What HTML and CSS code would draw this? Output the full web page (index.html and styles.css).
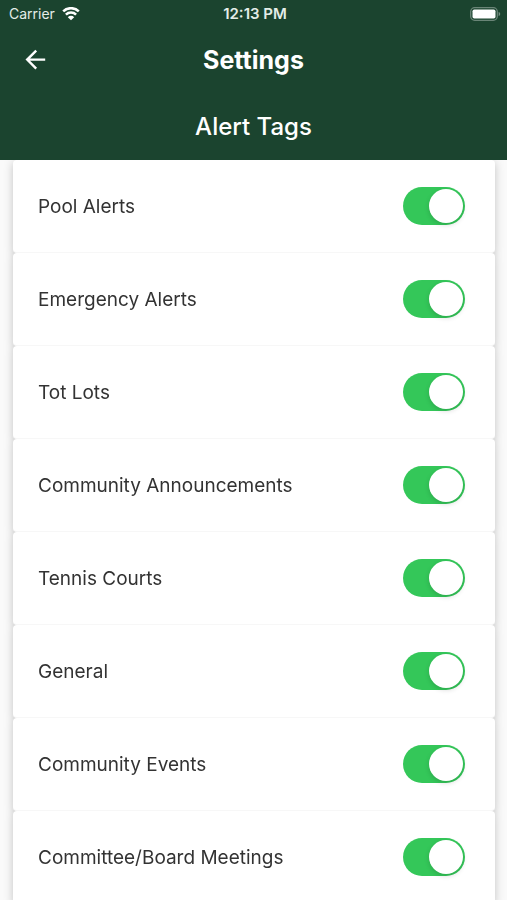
FILE: index.html
```
<!DOCTYPE html>
<html lang="en">
<head>
    <meta charset="UTF-8">
    <meta name="viewport" content="width=device-width, initial-scale=1.0">
    <title>Settings</title>
    <link rel="stylesheet" href="styles.css">
</head>
<body>
<header class="header">
    <div class="status-bar">
        <div class="carrier">
            <span>Carrier</span>
            <svg class="wifi" viewBox="0 0 18 14" aria-hidden="true">
                <path d="M1.2 4.4a11 11 0 0 1 15.6 0M3.9 7.7a7.2 7.2 0 0 1 10.2 0" fill="none" stroke="currentColor" stroke-width="2.5"/>
                <path d="M9 13.3L5.8 10.2a4.5 4.5 0 0 1 6.4 0z" fill="currentColor"/>
            </svg>
        </div>
        <time class="clock">12:13 PM</time>
        <svg class="battery" viewBox="0 0 31 14" aria-hidden="true">
            <rect x="0.7" y="0.7" width="26.6" height="12.6" rx="4" fill="none" stroke="currentColor" stroke-opacity="0.35" stroke-width="1.3"/>
            <rect x="2.5" y="2.5" width="23" height="9" rx="1.8" fill="currentColor"/>
            <path d="M28.6 5v4c1.1-.4 1.6-1.1 1.6-2s-.5-1.6-1.6-2z" fill="currentColor" fill-opacity="0.4"/>
        </svg>
    </div>
    <div class="nav-bar">
        <button type="button" class="back" aria-label="Back">
            <svg viewBox="0 0 22 22" aria-hidden="true">
                <path d="M20.2 10.6H2.4M11.2 1.6L2.2 10.6l9 9" fill="none" stroke="currentColor" stroke-width="2.4"/>
            </svg>
        </button>
        <h1>Settings</h1>
    </div>
    <h2>Alert Tags</h2>
</header>

<main class="tags">
    <label class="tag">
        <span>Pool Alerts</span>
        <input type="checkbox" class="switch" role="switch" checked>
    </label>
    <label class="tag">
        <span>Emergency Alerts</span>
        <input type="checkbox" class="switch" role="switch" checked>
    </label>
    <label class="tag">
        <span>Tot Lots</span>
        <input type="checkbox" class="switch" role="switch" checked>
    </label>
    <label class="tag">
        <span>Community Announcements</span>
        <input type="checkbox" class="switch" role="switch" checked>
    </label>
    <label class="tag">
        <span>Tennis Courts</span>
        <input type="checkbox" class="switch" role="switch" checked>
    </label>
    <label class="tag">
        <span>General</span>
        <input type="checkbox" class="switch" role="switch" checked>
    </label>
    <label class="tag">
        <span>Community Events</span>
        <input type="checkbox" class="switch" role="switch" checked>
    </label>
    <label class="tag">
        <span>Committee/Board Meetings</span>
        <input type="checkbox" class="switch" role="switch" checked>
    </label>
</main>
</body>
</html>
```

FILE: styles.css
```
* {
    box-sizing: border-box;
}
html {
    scrollbar-width: none;
}
body {
    margin: 0;
    background: #fafafa;
    color: #333;
    font-family: Inter, "Liberation Sans", sans-serif;
}
.header {
    position: relative;
    z-index: 1;
    padding-bottom: 15px;
    background: #1b442f;
    color: #fff;
}
.status-bar {
    display: grid;
    grid-template-columns: 1fr auto 1fr;
    align-items: center;
    height: 27px;
    padding: 0 6px 0 9px;
    font-size: 14px;
    color: #e4ede8;
}
.carrier {
    display: flex;
    align-items: center;
    gap: 7px;
}
.wifi {
    width: 18px;
    height: 14px;
    color: #fff;
}
.clock {
    font-size: 15px;
    font-weight: 600;
}
.battery {
    justify-self: end;
    width: 31px;
    height: 14px;
    color: #fff;
}
.nav-bar {
    display: grid;
    grid-template-columns: 48px 1fr 48px;
    align-items: center;
    height: 65px;
    padding: 0 12px;
}
.back {
    width: 48px;
    height: 48px;
    padding: 13px;
    border: none;
    background: none;
    color: inherit;
    cursor: pointer;
}
.back svg {
    display: block;
    width: 22px;
    height: 22px;
}
h1,
h2 {
    margin: 0;
    text-align: center;
}
h1 {
    font-size: 25px;
    font-weight: 700;
}
h2 {
    padding-top: 17px;
    font-size: 24px;
    font-weight: 500;
    line-height: 36px;
}
/* one shadow for the whole stack, so cards don't shade each other */
.tags {
    padding: 0 12px 0 13px;
    filter: drop-shadow(0 2px 5px rgba(0, 0, 0, 0.22));
}
.tag {
    display: flex;
    align-items: center;
    justify-content: space-between;
    height: 93px;
    padding: 0 30px 0 25px;
    border-bottom: 1px solid #f7f7f7;
    border-radius: 4px;
    background: #fff;
    font-size: 19px;
    cursor: pointer;
}
.switch {
    flex: none;
    appearance: none;
    display: flex;
    width: 62px;
    height: 38px;
    margin: 0;
    padding: 2px;
    border-radius: 19px;
    background: #ddd;
    cursor: pointer;
}
.switch::before {
    content: "";
    width: 34px;
    height: 34px;
    border-radius: 50%;
    background: #fff;
    box-shadow: 0 2px 5px rgba(0, 0, 0, 0.15);
}
.switch:checked {
    justify-content: flex-end;
    background: #34c759;
}
```
